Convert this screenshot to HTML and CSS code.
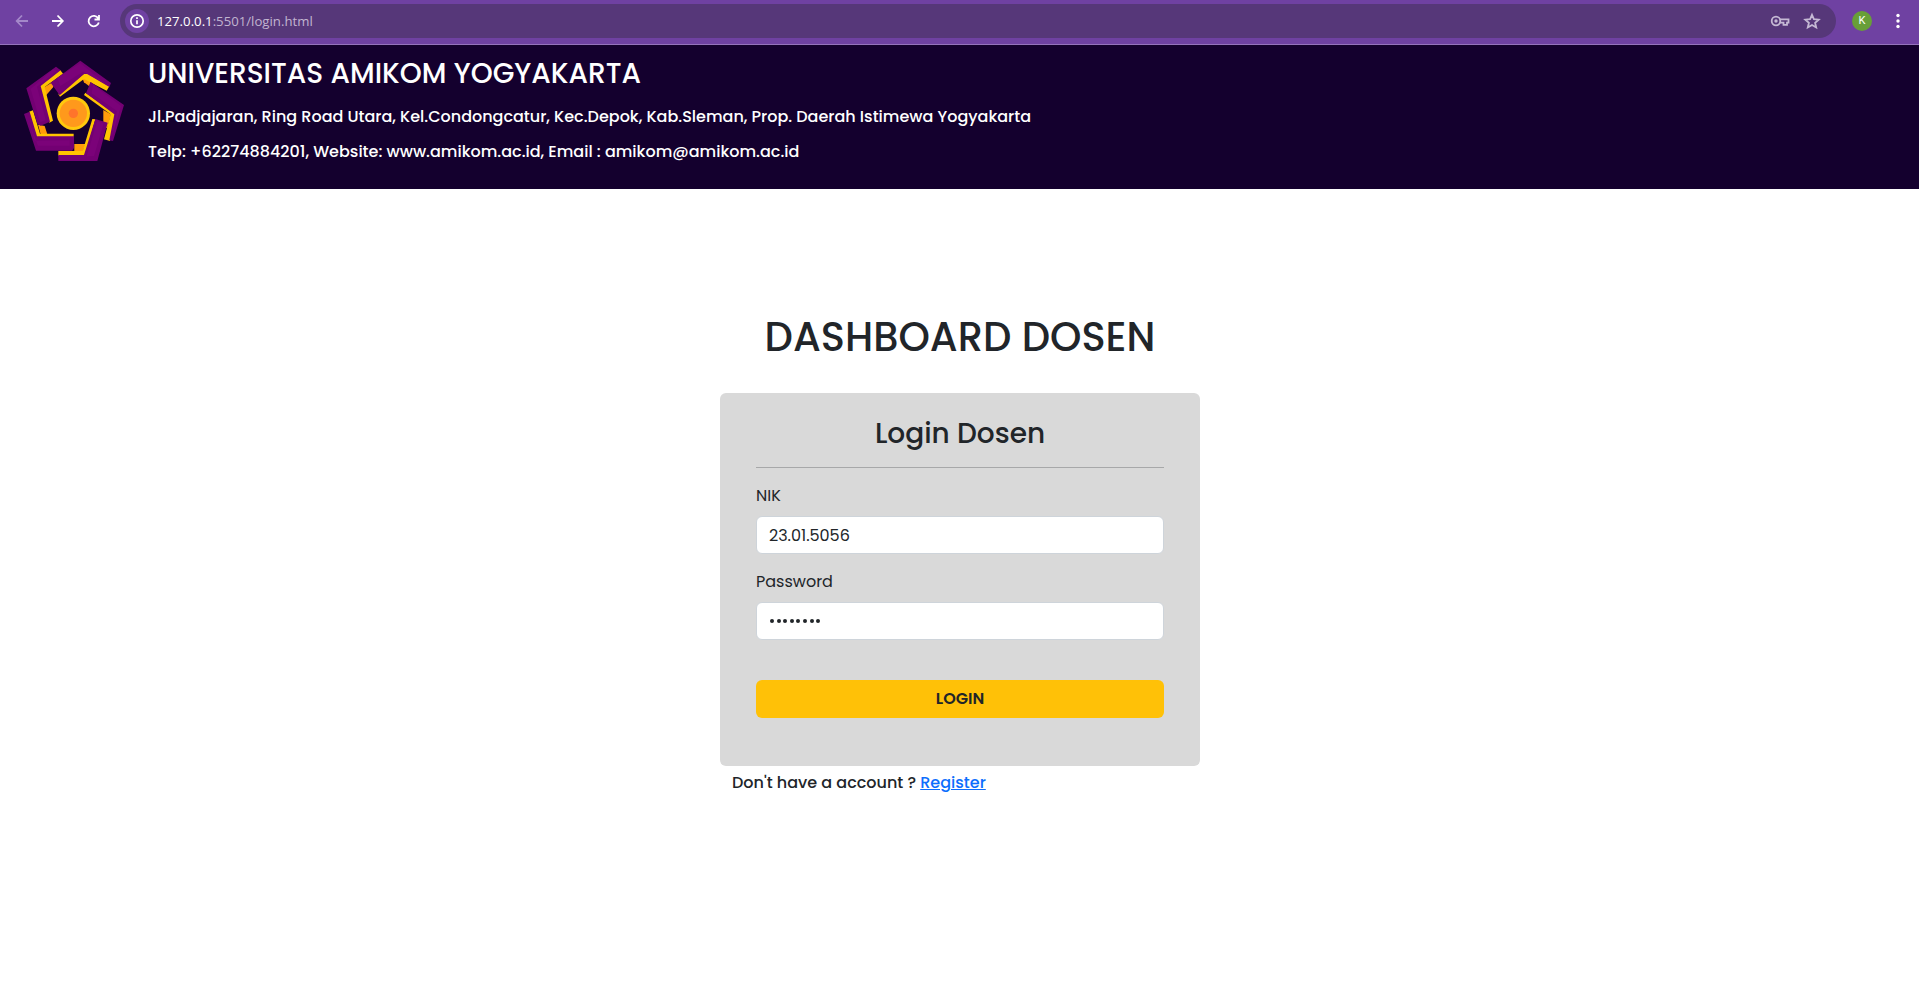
FILE: index.html
```html
<!DOCTYPE html>
<html lang="id">
<head>
<meta charset="utf-8">
<title>Login Dosen</title>
<link rel="stylesheet" href="styles.css">
</head>
<body>
<div class="toolbar">
  <svg class="nav-icons" width="120" height="44" viewBox="0 0 120 44" fill="none" stroke-width="1.8">
    <path stroke="#a488c9" d="M28 21H17M22 15.5L16.7 21L22 26.500"/>
    <path stroke="#fff" d="M52 21H63M57.500 15.500L62.800 21L57.500 26.500"/>
    <path stroke="#fff" d="M98.300 18.500A5.200 5.200 0 1 0 98.800 22.500M99 15V19.500H94.500"/>
  </svg>
  <div class="address">
    <span class="info"><svg width="24" height="24" viewBox="0 0 24 24" fill="none" stroke="#fff" stroke-width="1.7"><circle cx="12" cy="12" r="6.200"/><path d="M12 11.200V15.300M12 8.300V9.900"/></svg></span>
    <span class="url"><b>127.0.0.1</b>:5501/login.html</span>
    <svg class="tools" width="57" height="24" viewBox="0 0 57 24" fill="none" stroke="#c5b9d4" stroke-width="1.800">
      <circle cx="8" cy="12" r="4.300"/><circle cx="8" cy="12" r=".8" fill="#c5b9d4"/>
      <path d="M12 10.300H20.500V13.700H19V15.800H15.500V13.700H12"/>
      <path d="M44 5.800L45.900 10.200L50.700 10.600L47.100 13.800L48.200 18.500L44 16L39.800 18.500L40.900 13.800L37.300 10.600L42.100 10.200Z"/>
    </svg>
  </div>
  <span class="avatar">K</span>
  <svg class="dots" width="4" height="16" viewBox="0 0 4 16" fill="#fff"><circle cx="2" cy="2.500" r="1.700"/><circle cx="2" cy="8" r="1.700"/><circle cx="2" cy="13.500" r="1.700"/></svg>
</div>
<header class="header">
  <svg class="logo" width="130" height="140" viewBox="0 0 390 420">
    <g fill="#ff9c0a">
      <path d="M100 128L130 110V126L107 152Z"/>
      <path d="M216 96L242 108L238 124L222 112Z"/>
      <path d="M280 195L303 208L292 250L280 246Z"/>
      <path d="M193 297H226L218 322H193Z"/>
      <path d="M84 239L104 243L112 268H92Z"/>
    </g>
    <g fill="#ffc400">
      <path d="M150 74L159 86L104 126L129 227L118 233L88 124Z"/>
      <path d="M145 147L150 155L222 102L290 137L298 124L228 82Z"/>
      <path d="M226 143L222 150L302 208L282 283L300 288L318 206Z"/>
      <path d="M256 223L247 222L218 318H145V332H226Z"/>
      <path d="M57 200L69 196L90 266H191V276H78Z"/>
    </g>
    <g fill="#730073">
      <path d="M138 65L152 76L92 123L120 230L92 242L82 236L49 130Z"/>
      <path d="M211 47L303 114L298 126L232 87H222L149 151L122 113Z"/>
      <path d="M242 111L342 180L309 288L298 286L313 208L228 145Z"/>
      <path d="M256 222L293 233L262 348H145V330H222Z"/>
      <path d="M42 207L59 200L81 274H192V309L186 317H78Z"/>
    </g>
    <g fill="#84057f" opacity=".5">
      <path d="M130 73L62 132L91 232L107 225L81 125L140 78Z"/>
      <path d="M211 55L142 98L151 123L219 80L290 119Z"/>
      <path d="M249 119L333 183L304 279L321 198L245 145Z"/>
      <path d="M262 228L281 235L252 333L153 340L230 334Z"/>
      <path d="M49 209L74 287L179 286V302H84Z"/>
    </g>
    <circle cx="190" cy="205" r="50" fill="#ffc90d"/>
    <circle cx="190" cy="205" r="41" fill="#ff991c"/>
    <circle cx="190" cy="205" r="14" fill="#ff742b"/>
  </svg>
  <div class="school">
    <h1 class="name">UNIVERSITAS AMIKOM YOGYAKARTA</h1>
    <p class="line street">Jl.Padjajaran, Ring Road Utara, Kel.Condongcatur, Kec.Depok, Kab.Sleman, Prop. Daerah Istimewa Yogyakarta</p>
    <p class="line contact">Telp: +62274884201, Website: www.amikom.ac.id, Email : amikom@amikom.ac.id</p>
  </div>
</header>
<main class="main">
  <h2 class="heading">DASHBOARD DOSEN</h2>
  <form class="card">
    <h3 class="card-title">Login Dosen</h3>
    <label class="label" for="nik">NIK</label>
    <input class="field" id="nik" type="text" value="23.01.5056">
    <label class="label" for="password">Password</label>
    <div class="field secret" id="password"><i></i><i></i><i></i><i></i><i></i><i></i><i></i><i></i></div>
    <button class="submit" type="button">LOGIN</button>
  </form>
  <p class="signup">Don't have a account ? <a class="link" href="#">Register</a></p>
</main>
</body>
</html>
```

FILE: styles.css
```css
* { box-sizing: border-box; }
body {
  margin: 0;
  height: 988px;
  overflow: hidden;
  background: #fff;
  color: #212529;
  font-family: Poppins, Inter, sans-serif;
  font-size: 16px;
}
h1, h2, h3, p { margin: 0; font-weight: 500; }
.toolbar {
  display: flex;
  align-items: center;
  height: 45px;
  padding-bottom: 3px;
  background: #6f41a2;
  border-bottom: 1px solid #9673bd;
}
.nav-icons { height: 44px; flex: none; align-self: flex-start; }
.address {
  display: flex;
  align-items: center;
  width: 1716px;
  height: 34px;
  padding: 0 11px 0 5px;
  border-radius: 17px;
  background: #563779;
}
.info { width: 24px; height: 24px; border-radius: 50%; background: #6f41a2; }
.url {
  flex: 1;
  margin-left: 8px;
  color: #c1b4d0;
  font: 13.2px/24px "Open Sans", "Noto Sans", sans-serif;
}
.url b { color: #fff; font-weight: 400; }
.avatar {
  width: 20px;
  height: 20px;
  margin: 0 24px 0 16px;
  border-radius: 50%;
  background: #689f38;
  color: #fff;
  font: 11px/20px Roboto, sans-serif;
  text-align: center;
}
.header { display: flex; height: 144px; background: #14002e; color: #fff; }
.logo { margin-left: 10px; flex: none; }
.school { margin-left: 8px; white-space: nowrap; }
.name { margin-top: 12px; font-size: 28px; line-height: 34px; }
.line { line-height: 24px; }
.street { margin-top: 14px; }
.contact { margin-top: 11px; }
.main { width: 480px; margin: 0 auto 0 720px; }
.heading {
  padding-top: 124px;
  font-size: 40px;
  line-height: 48px;
  text-align: center;
  white-space: nowrap;
}
.card {
  display: flex;
  flex-direction: column;
  height: 373px;
  margin-top: 32px;
  padding: 24px 36px 0;
  border-radius: 6px;
  background: #d9d9d9;
}
.card-title {
  height: 51px;
  border-bottom: 1px solid #a7a8a9;
  font-size: 28px;
  line-height: 34px;
  text-align: center;
}
.label { margin: 16px 0 8px; line-height: 24px; }
.field {
  width: 100%;
  height: 38px;
  padding: 0 12px;
  border: 1px solid #ced4da;
  border-radius: 6px;
  background: #fff;
  color: #212529;
  font: 16px/24px Poppins, Inter, sans-serif;
}
.secret { display: flex; align-items: center; gap: 2.6px; padding-left: 13px; }
.secret i { width: 4px; height: 4px; border-radius: 50%; background: #212529; }
.submit {
  height: 38px;
  margin-top: 40px;
  border: 0;
  border-radius: 6px;
  background: #ffc107;
  color: #212529;
  font: 600 16px/24px Poppins, Inter, sans-serif;
}
.signup { margin: 5px 0 0 12px; line-height: 24px; }
.link { color: #0d6efd; }
```
